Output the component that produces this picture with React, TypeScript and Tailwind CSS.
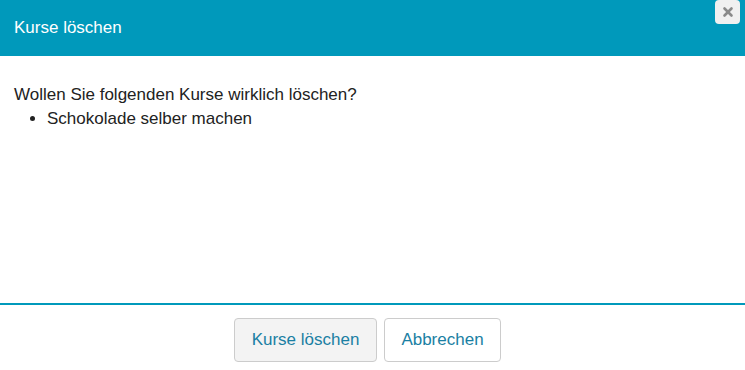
import { X } from "lucide-react";

export default function App() {
  return (
    <div
      className="w-[745px] h-[370px] bg-white flex flex-col overflow-hidden"
      style={{ fontFamily: '"Liberation Sans", Arial, sans-serif' }}
    >
      {/* header */}
      <div className="relative h-[56px] bg-[#0099bb] flex items-center px-[14px] shrink-0">
        <h1 className="text-white text-[17px]">Kurse löschen</h1>
        <button className="absolute right-[5px] top-0 w-[25px] h-[24px] rounded-[4px] bg-[#f0f0f0] flex items-center justify-center">
          <X size={14} strokeWidth={4.5} className="text-[#8a8a8a]" />
        </button>
      </div>

      {/* body */}
      <div className="flex-1 px-[14px] pt-[27px] text-[17px] text-[#222] leading-[24px]">
        <p>Wollen Sie folgenden Kurse wirklich löschen?</p>
        <ul className="list-disc pl-[33px]">
          <li>Schokolade selber machen</li>
        </ul>
      </div>

      {/* footer */}
      <div className="h-[2px] bg-[#0099bb] shrink-0" />
      <div className="h-[65px] shrink-0 flex justify-center items-start pt-[13px] pr-[10px] gap-[7px]">
        <button className="h-[44px] w-[143px] rounded-[4px] border border-[#cccccc] bg-[#f3f3f3] text-[#1a7fa3] text-[17px]">
          Kurse löschen
        </button>
        <button className="h-[44px] w-[117px] rounded-[4px] border border-[#cccccc] bg-white text-[#1a7fa3] text-[17px]">
          Abbrechen
        </button>
      </div>
    </div>
  );
}
